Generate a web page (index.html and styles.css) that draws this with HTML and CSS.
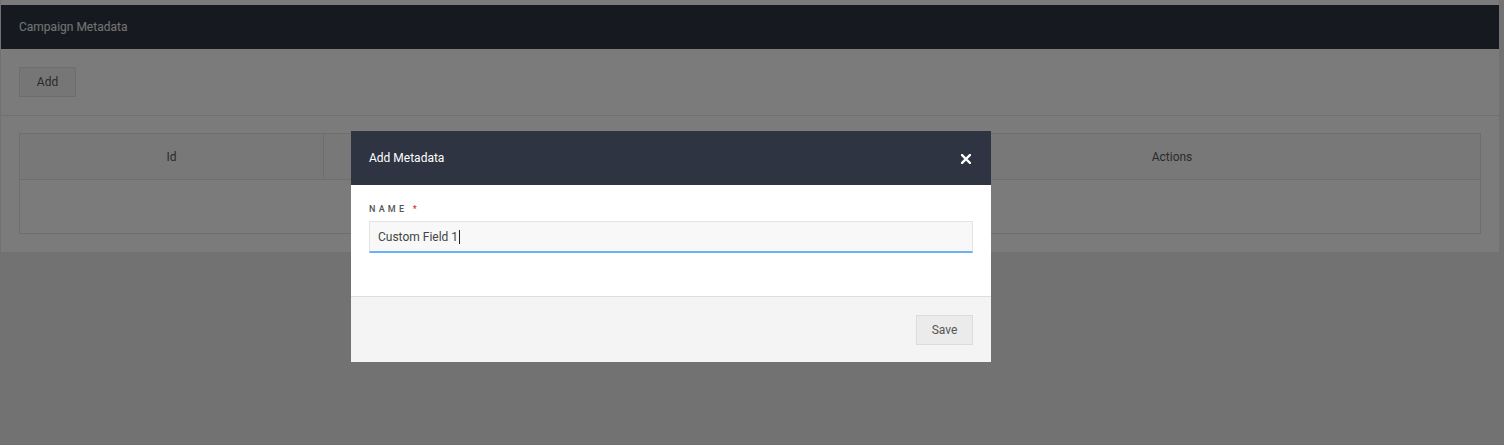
FILE: index.html
```html
<!DOCTYPE html>
<html>
<head>
<meta charset="utf-8">
<title>Campaign Metadata</title>
<link rel="stylesheet" href="styles.css">
</head>
<body>
<div class="page">
  <section class="card">
    <header class="card-header">Campaign Metadata</header>
    <div class="toolbar">
      <button class="btn">Add</button>
    </div>
    <div class="table-wrap">
      <table class="grid">
        <thead>
          <tr>
            <th class="col-id">Id</th>
            <th class="col-name">Name</th>
            <th class="col-actions">Actions</th>
          </tr>
        </thead>
        <tbody>
          <tr><td colspan="3"></td></tr>
        </tbody>
      </table>
    </div>
  </section>
</div>

<div class="backdrop"></div>

<div class="modal">
  <div class="modal-header">
    <span class="modal-title">Add Metadata</span>
    <svg class="close" width="10" height="10" viewBox="0 0 10 10">
      <path d="M1 1 L9 9 M9 1 L1 9" stroke="#ffffff" stroke-width="2.4" stroke-linecap="square"/>
    </svg>
  </div>
  <div class="modal-body">
    <label class="field-label">NAME <span class="req">*</span></label>
    <div class="input"><span class="value">Custom Field 1</span><span class="caret"></span></div>
  </div>
  <div class="modal-footer">
    <button class="btn">Save</button>
  </div>
</div>
</body>
</html>
```
FILE: styles.css
```css
html, body {
  margin: 0;
  padding: 0;
}
body {
  background: #e5e5e5;
  font-family: Roboto, "Liberation Sans", sans-serif;
  font-size: 12px;
  color: #555;
  width: 1504px;
  height: 445px;
  overflow: hidden;
}
.page {
  padding-right: 4px;
}
.card {
  background: #f6f6f6;
  border: 1px solid #e2e2e2;
  border-top: none;
  padding-top: 5px;
  padding-bottom: 18px;
}
.card-header {
  background: #2d3441;
  color: #e8e8e8;
  height: 44px;
  line-height: 44px;
  padding-left: 18px;
  font-size: 12px;
}
.toolbar {
  padding: 18px 18px 18px;
  border-bottom: 1px solid #e0e0e0;
}
.btn {
  font-family: Roboto, "Liberation Sans", sans-serif;
  font-size: 12px;
  color: #555;
  background: #ececec;
  border: 1px solid #dcdcdc;
  width: 57px;
  height: 30px;
  padding: 0;
  display: block;
}
.table-wrap {
  padding: 17px 18px 0;
}
.grid {
  width: 100%;
  border-collapse: collapse;
  border: 1px solid #dcdcdc;
}
.grid th {
  background: #f1f1f1;
  font-weight: 400;
  color: #555;
  height: 43px;
  padding: 1px;
  border: 1px solid #dcdcdc;
  text-align: center;
}
.col-id { width: 301px; }
.col-actions { width: 614px; }
.grid td {
  height: 53px;
  padding: 0;
  border: 1px solid #dcdcdc;
}
.backdrop {
  position: fixed;
  inset: 0;
  background: rgba(0, 0, 0, 0.5);
}
.modal {
  position: fixed;
  left: 351px;
  top: 131px;
  width: 640px;
  background: #fff;
}
.modal-header {
  background: #2e3441;
  height: 54px;
  display: flex;
  align-items: center;
  justify-content: space-between;
  padding: 0 20px 0 18px;
}
.modal-title {
  color: #fff;
  font-size: 12px;
}
.close {
  display: block;
  margin-top: 1px;
}
.modal-body {
  padding: 18px 18px 43px;
}
.field-label {
  display: block;
  font-size: 9px;
  line-height: 12px;
  font-weight: 500;
  letter-spacing: 3.2px;
  color: #555;
  margin-bottom: 6px;
}
.req {
  color: #d0342c;
}
.input {
  height: 29px;
  background: #f8f8f8;
  border: 1px solid #e3e3e3;
  border-bottom: 2px solid #6cb2f0;
  display: flex;
  align-items: center;
  padding-left: 8px;
  color: #444;
  font-size: 12px;
}
.caret {
  display: inline-block;
  width: 1px;
  height: 14px;
  background: #222;
  margin-left: 1px;
}
.modal-footer {
  background: #f4f4f4;
  border-top: 1px solid #dedede;
  height: 66px;
  display: flex;
  justify-content: flex-end;
  align-items: flex-start;
  padding: 18px 18px 0;
  box-sizing: border-box;
}
.modal-footer .btn {
  background: #ebebeb;
  border-color: #dcdcdc;
}
```
